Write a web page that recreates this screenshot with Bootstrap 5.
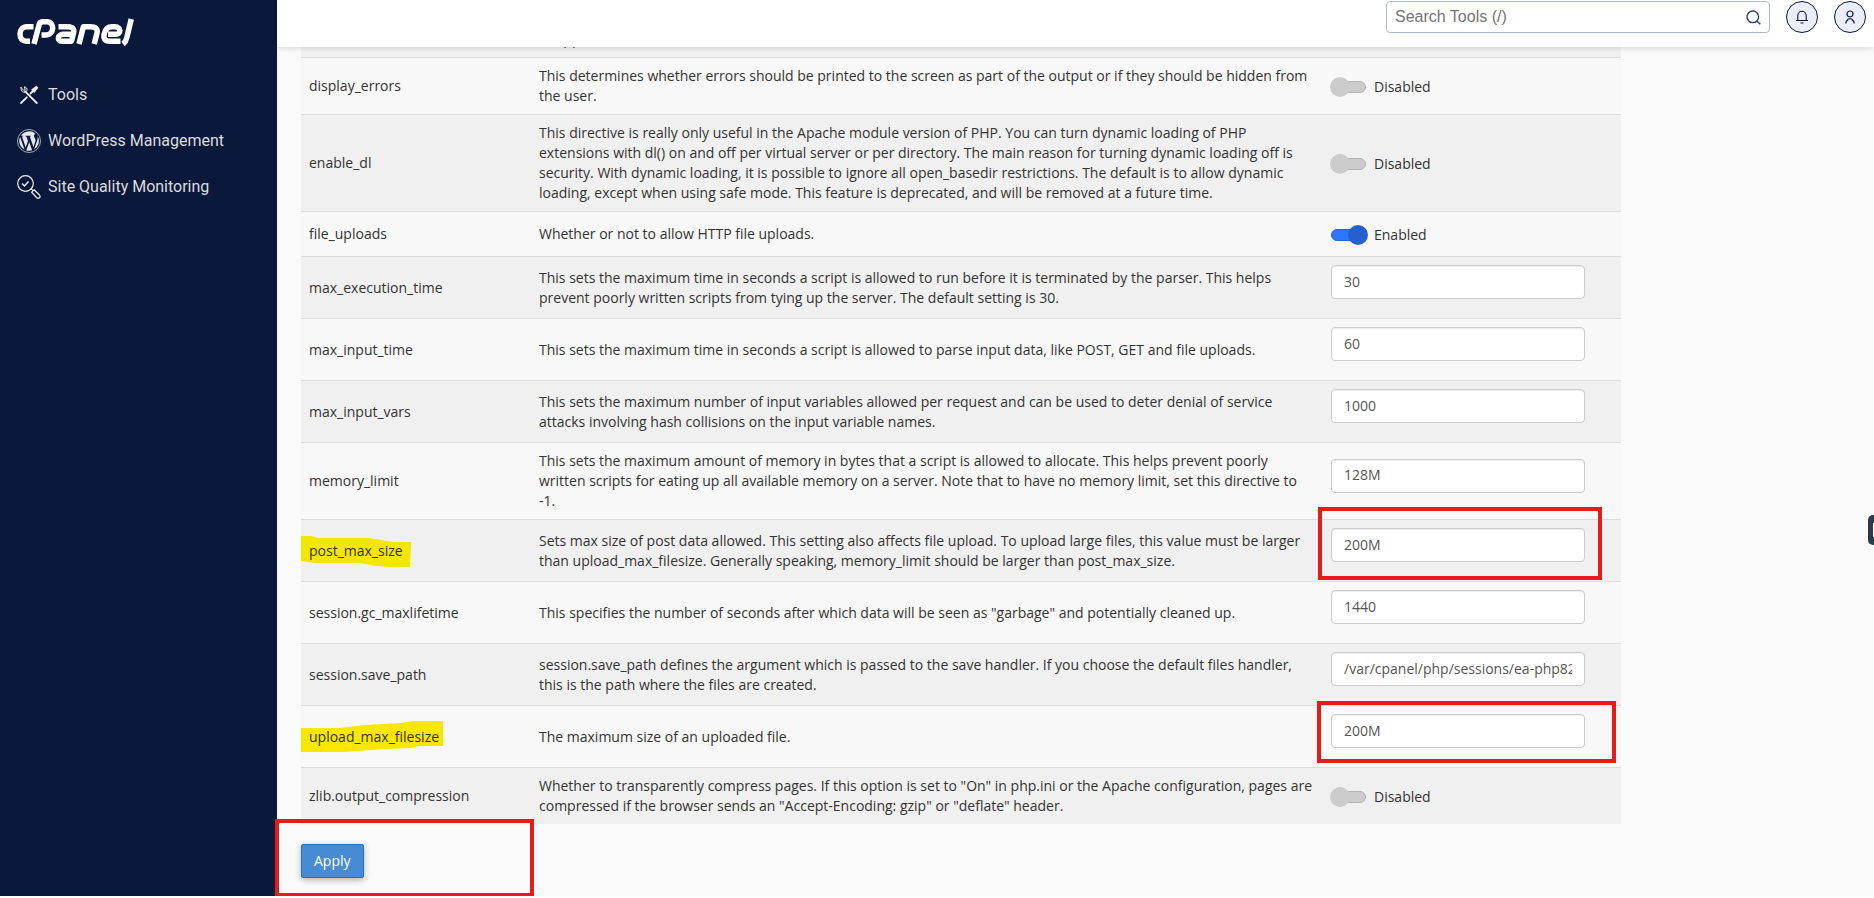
<!DOCTYPE html>
<html lang="en">
<head>
<meta charset="utf-8">
<meta name="viewport" content="width=device-width, initial-scale=1">
<title>cPanel - MultiPHP INI Editor</title>
<link href="https://cdn.jsdelivr.net/npm/bootstrap@5.3.0/dist/css/bootstrap.min.css" rel="stylesheet">
<style>
  body { font: 14px/20px "Open Sans", "Noto Sans", sans-serif; color: #333; background: #fff; }
  .side { width: 277px; background: #0a183c; font: 16px/24px Roboto, sans-serif; }
  .side .brand { display: block; padding: 16px 16px 0; height: 71px; }
  .side .brand svg { display: block; }
  .side .item { height: 46px; padding: 1px 16px 0 17px; gap: 7px; color: #dcdcdc; text-decoration: none; }
  .side svg { flex: none; }
  .workspace { background: #fafafa; min-width: 0; }
  .topbar { height: 47px; background: #fff; box-shadow: 0 1px 6px rgba(0,0,0,.15); padding: 1px 8px 0 0; gap: 16px; z-index: 2; }
  .search { width: 384px; height: 32px; border: 1px solid #b0b7cc; border-radius: 4px; padding: 0 8px; }
  .search input { border: 0; outline: 0; padding: 0; font: 16px/20px "Liberation Sans", Arial, sans-serif; min-width: 0; }
  .search input::placeholder { color: #757575; opacity: 1; }
  .round { width: 32px; height: 32px; border: 1px solid #0a183c; background: #eceeff; padding: 0; color: #0a183c; }
  .content { padding: 0 24px; max-width: 1368px; }
  .scrolled-in { margin-top: -18px; }
  .ini { table-layout: fixed; width: 100%; border-collapse: separate; border-spacing: 0; }
  .ini td, .ini th { padding: 8px; border-top: 1px solid #ddd; vertical-align: middle; font-weight: 400; text-align: left; }
  .ini tr:nth-child(odd) > * { background: #f0f0f0; }
  .ini tr:nth-child(even) > * { background: #f8f8f8; }
  .ini tr:first-child > * { padding-top: 0; border-top: 0; }
  .col-name { width: 230px; }
  .col-value { width: 298px; }
  .field { width: 254px; height: 34px; border: 1px solid #ccc; border-radius: 4px; padding: 5px 12px 7px; margin-bottom: 11px; color: #555; display: block; box-shadow: inset 0 1px 1px rgba(0,0,0,.075); background: #fff; }
  .toggle { height: 28px; gap: 5px; padding-top: 2px; }
  .toggle input { appearance: none; margin: 0; width: 38px; height: 20px; position: relative; }
  .toggle input::before { content: ""; position: absolute; left: 0; top: 4px; width: 35px; height: 12px; border-radius: 6px; background: #ccc; border: 1px solid #b4b4b4; }
  .toggle input::after { content: ""; position: absolute; left: -1px; top: 0; width: 20px; height: 20px; border-radius: 50%; background: #ccc; }
  .toggle input:checked::before { background: #2f76ff; border-color: #2563d5; }
  .toggle input:checked::after { left: 17px; background: #2460d0; }
  .marked { position: relative; z-index: 0; }
  .marked svg { position: absolute; left: -8px; top: -16px; z-index: -1; }
  .boxed { position: relative; width: 254px; }
  .boxed::after, .apply-area::after { content: ""; position: absolute; border: 4px solid #e71b1c; pointer-events: none; }
  .boxed-post::after { left: -13px; right: -17px; top: -21px; bottom: -18px; }
  .boxed-upload::after { left: -14px; right: -31px; top: -13px; bottom: -15px; }
  .boxed .field { margin-bottom: 0; }
  .value-pad { padding-bottom: 11px; }
  .apply-area { position: relative; padding: 20px 0 18px; z-index: 1; }
  .apply-area::after { left: -26px; top: -5px; width: 259px; bottom: -1px; }
  .apply { background: #478bd4; border: 1px solid #2d6fb5; border-radius: 2px; color: #fff; font: 14px/20px "Open Sans", sans-serif; padding: 6px 12px; box-shadow: 0 2px 6px rgba(0,0,0,.3); }
  .dock { position: absolute; right: 0; top: 515px; width: 6px; height: 30px; background: #2c3b4a; border-radius: 5px 0 0 5px; z-index: 3; padding: 0; border: 0; }
  .dock::after { content: ""; position: absolute; right: 0; top: 8px; width: 1px; height: 14px; background: #fff; }
</style>
</head>
<body>
<div class="shell d-flex position-relative">
  <nav class="side flex-shrink-0" aria-label="Main">
    <a class="brand" href="#" aria-label="cPanel">
      <svg width="120" height="30" viewBox="0 0 120 30" fill="none" stroke="#fff" stroke-width="5.500" stroke-linejoin="round">
        <path d="M17.500 10.800H11C6.500 10.800 4 14 4 18 4 22.500 6.500 25.200 10.500 25.200H14"/>
        <path d="M18 28L23.300 8C23.900 6.300 25 5.800 27 5.800H31C39 5.800 38.500 19 30 19H25.500"/>
        <path d="M42.500 10.800H52C57 10.800 58.500 13 57.500 17L55.500 25.200H46C40.500 25.200 41.500 18.200 47 18.200H55"/>
        <path d="M63 28L67.400 10.800H74C80 10.800 82 13 81 17L78.200 28"/>
        <path d="M104.500 25.200H94C88.500 25.200 87.200 22 88.200 18 89.300 13 91.500 10.800 96 10.800H99C105.500 10.800 105 18.200 100 18.200H92"/>
        <path d="M115.300 3L110.800 21.500C110.200 24.500 109 26.500 107 28"/>
      </svg>
    </a>
    <a class="item d-flex align-items-center" href="#">
      <svg width="24" height="24" viewBox="0 0 24 24" fill="none" stroke="#eee" stroke-width="1.800" stroke-linecap="round"><path d="M4 20L9.800 14.300M8 8.300L19.800 20M13.500 10.500L17 7"/><path d="M4 4.500L6.500 7.300 8.300 6.500 7.300 3.900C10 4 11 7 9 8.700 6.800 10.300 3.600 8.500 4 4.500Z" stroke-width="1"/><path d="M15.500 6.800L19.300 4 20.200 4.900 17.200 8.600Z"/></svg>
      <span>Tools</span></a>
    <a class="item d-flex align-items-center" href="#">
      <svg width="24" height="24" viewBox="0 0 24 24" fill="#e6e8ec"><circle cx="12" cy="12" r="11.500" fill="none" stroke="#e6e8ec" stroke-width=".7"/><path d="M3.100 8.100A9.800 9.800 0 0 0 7.600 20.800ZM4 6.700A9.800 9.800 0 0 1 18.600 4.800C17 5 16.500 6.800 17.500 8.400 19 10.800 18.500 12 17.500 15L16.500 18.300 12.800 7.500 14 7.300V6.700H8V7.300L9.400 7.500 11 11.900 8.700 18.500 5 7.500 6.300 7.300V6.700ZM12.200 13L9.300 21.400Q12.500 22.200 15.100 21.300ZM20.600 7.300C21 10 20 12.500 19 15L17 20.500A9.800 9.800 0 0 0 20.600 7.300Z"/></svg>
      <span>WordPress Management</span></a>
    <a class="item d-flex align-items-center" href="#">
      <svg width="24" height="24" viewBox="0 0 24 24" fill="none" stroke="#eee" stroke-width="1.200"><circle cx="8.500" cy="8.500" r="7.800"/><path d="M5 8.500L7.500 11 11.500 6.500" stroke-width="1.500"/><path d="M14.200 13.800L16 15.600"/><path d="M17 14.800L22.500 20C24.200 22.200 21.500 24.400 19.500 22.500L14.700 17.200Z"/></svg>
      <span>Site Quality Monitoring</span></a>
  </nav>

  <div class="workspace flex-grow-1 d-flex flex-column">
    <header class="topbar d-flex justify-content-end align-items-start position-relative flex-shrink-0">
      <label class="search d-flex align-items-center">
        <input class="flex-grow-1 bg-transparent" type="search" placeholder="Search Tools (/)" aria-label="Search Tools">
        <svg width="15" height="15" viewBox="0 0 15 15" fill="none" stroke="#27407c" stroke-width="1.400"><circle cx="6.800" cy="6.800" r="5.800"/><path d="M11 11L14.300 14.300"/></svg>
      </label>
      <button class="round rounded-circle d-flex align-items-center justify-content-center" type="button" aria-label="Notifications">
        <svg width="14" height="14" viewBox="0 0 14 14" fill="none" stroke="currentColor" stroke-width="1.100"><path d="M1 10.500H13M2.800 10.500V5.500A4.200 4.200 0 0 1 11.200 5.500V10.500M5.500 13H8.500"/></svg>
      </button>
      <button class="round rounded-circle d-flex align-items-center justify-content-center" type="button" aria-label="Account">
        <svg width="14" height="14" viewBox="0 0 14 14" fill="none" stroke="currentColor" stroke-width="1.200"><circle cx="7" cy="4" r="3"/><path d="M2.800 13.500C2.800 11.500 4 10.300 5.300 9.800M11.200 13.500C11.200 11.500 10 10.300 8.700 9.800M4.200 9.800C5.500 8.400 8.500 8.400 9.800 9.800"/></svg>
      </button>
    </header>

    <main>
      <div class="content scrolled-in">
        <table class="ini">
          <colgroup><col class="col-name"><col><col class="col-value"></colgroup>
          <tbody>
            <tr><th scope="row"></th><td>wrappers.</td><td></td></tr>
            <tr><th scope="row">display_errors</th><td>This determines whether errors should be printed to the screen as part of the output or if they should be hidden from the user.</td><td><label class="toggle d-flex align-items-center"><input type="checkbox" role="switch"> Disabled</label></td></tr>
            <tr><th scope="row">enable_dl</th><td>This directive is really only useful in the Apache module version of PHP. You can turn dynamic loading of PHP extensions with dl() on and off per virtual server or per directory. The main reason for turning dynamic loading off is security. With dynamic loading, it is possible to ignore all open_basedir restrictions. The default is to allow dynamic loading, except when using safe mode. This feature is deprecated, and will be removed at a future time.</td><td><label class="toggle d-flex align-items-center"><input type="checkbox" role="switch"> Disabled</label></td></tr>
            <tr><th scope="row">file_uploads</th><td>Whether or not to allow HTTP file uploads.</td><td><label class="toggle d-flex align-items-center"><input type="checkbox" role="switch" checked> Enabled</label></td></tr>
            <tr><th scope="row"><label for="f1">max_execution_time</label></th><td>This sets the maximum time in seconds a script is allowed to run before it is terminated by the parser. This helps prevent poorly written scripts from tying up the server. The default setting is 30.</td><td><input class="field" id="f1" type="text" value="30"></td></tr>
            <tr><th scope="row"><label for="f2">max_input_time</label></th><td>This sets the maximum time in seconds a script is allowed to parse input data, like POST, GET and file uploads.</td><td><input class="field" id="f2" type="text" value="60"></td></tr>
            <tr><th scope="row"><label for="f3">max_input_vars</label></th><td>This sets the maximum number of input variables allowed per request and can be used to deter denial of service attacks involving hash collisions on the input variable names.</td><td><input class="field" id="f3" type="text" value="1000"></td></tr>
            <tr><th scope="row"><label for="f4">memory_limit</label></th><td>This sets the maximum amount of memory in bytes that a script is allowed to allocate. This helps prevent poorly written scripts for eating up all available memory on a server. Note that to have no memory limit, set this directive to -1.</td><td><input class="field" id="f4" type="text" value="128M"></td></tr>
            <tr><th scope="row"><div class="marked"><svg width="112" height="50" fill="#f3e600"><path d="M0 11L10 11 17 13H68L80 15 92 17H110L109 42H88L76 41 58 38H14L0 36Z"/></svg><label for="f5">post_max_size</label></div></th><td>Sets max size of post data allowed. This setting also affects file upload. To upload large files, this value must be larger than upload_max_filesize. Generally speaking, memory_limit should be larger than post_max_size.</td><td><div class="value-pad"><div class="boxed boxed-post"><input class="field" id="f5" type="text" value="200M"></div></div></td></tr>
            <tr><th scope="row"><label for="f6">session.gc_maxlifetime</label></th><td>This specifies the number of seconds after which data will be seen as "garbage" and potentially cleaned up.</td><td><input class="field" id="f6" type="text" value="1440"></td></tr>
            <tr><th scope="row"><label for="f7">session.save_path</label></th><td>session.save_path defines the argument which is passed to the save handler. If you choose the default files handler, this is the path where the files are created.</td><td><input class="field" id="f7" type="text" value="/var/cpanel/php/sessions/ea-php82"></td></tr>
            <tr><th scope="row"><div class="marked"><svg width="144" height="50" fill="#f9e700"><path d="M0 17H38L64 14 100 12 112 10H142V35H118L110 37 84 38 44 41H0Z"/></svg><label for="f8">upload_max_filesize</label></div></th><td>The maximum size of an uploaded file.</td><td><div class="value-pad"><div class="boxed boxed-upload"><input class="field" id="f8" type="text" value="200M"></div></div></td></tr>
            <tr><th scope="row">zlib.output_compression</th><td>Whether to transparently compress pages. If this option is set to "On" in php.ini or the Apache configuration, pages are compressed if the browser sends an "Accept-Encoding: gzip" or "deflate" header.</td><td><label class="toggle d-flex align-items-center"><input type="checkbox" role="switch"> Disabled</label></td></tr>
          </tbody>
        </table>
        <div class="apply-area"><button class="apply" type="button">Apply</button></div>
      </div>
    </main>
  </div>
  <button class="dock" type="button" aria-label="Open side panel"></button>
</div>
<script src="https://cdn.jsdelivr.net/npm/bootstrap@5.3.0/dist/js/bootstrap.bundle.min.js"></script>
</body>
</html>
